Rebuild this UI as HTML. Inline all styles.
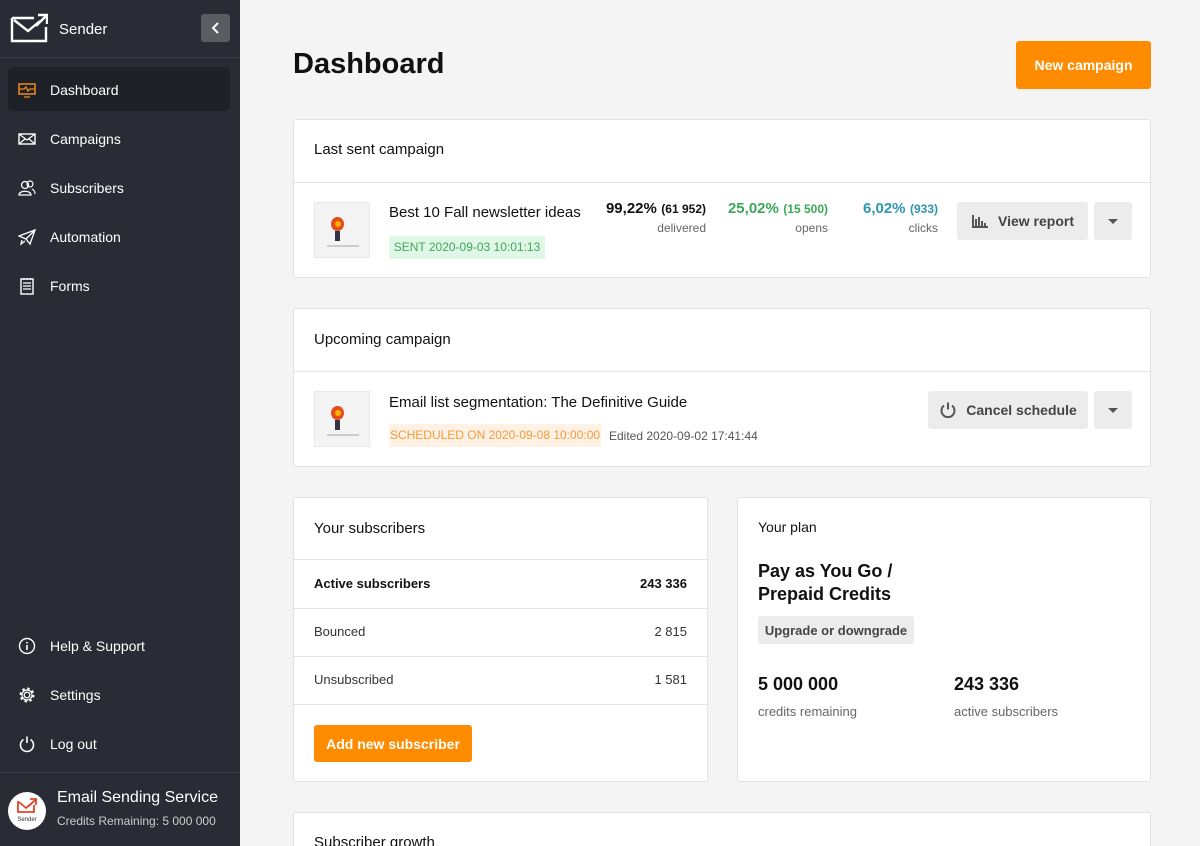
<!DOCTYPE html>
<html><head><meta charset="utf-8"><style>
*{box-sizing:border-box;margin:0;padding:0}
html,body{width:1200px;height:846px;overflow:hidden}
body{background:#f4f4f4;font-family:"Liberation Sans",Arial,sans-serif;position:relative;color:#111}
.a{position:absolute}
#sb{left:0;top:0;width:240px;height:846px;background:#292c34}
.mi{position:absolute;left:50px;color:#fff;font-size:14px;transform:translateY(-50%)}
.ic{position:absolute;left:18px;width:18px;height:18px;transform:translateY(-50%)}
.card{position:absolute;background:#fff;border:1px solid #e2e2e2;border-radius:3px}
.hd{font-size:15px;color:#111}
.thumb{position:absolute;width:56px;height:56px;background:#f4f4f4;border:1px solid #e8e8e8}
.btn{position:absolute;background:#ececec;border-radius:3px;font-weight:bold;font-size:14px;color:#444;display:flex;align-items:center;justify-content:center}
.dd{position:absolute;width:38px;height:38px;background:#ececec;border-radius:3px}
.dd:after{content:"";position:absolute;left:14px;top:17px;border-left:5px solid transparent;border-right:5px solid transparent;border-top:5px solid #555}
.line{position:absolute;left:0;right:0;height:1px;background:#e2e2e2}
.or{position:absolute;background:#ff8c00;color:#fff;font-weight:bold;font-size:14px;border-radius:3px;display:flex;align-items:center;justify-content:center}
</style></head><body>
<div id="sb" class="a">
 <svg class="a" style="left:10px;top:13px" width="38" height="30" viewBox="0 0 38 30"><path d="M2 5H24M2 5V28H36V14M4 7L18 18L30 8" fill="none" stroke="#fff" stroke-width="2.4"/><path d="M28 2H37V11M37 2L26 13" fill="none" stroke="#fff" stroke-width="2.4"/></svg>
 <div class="a" style="left:59px;top:21px;color:#fff;font-size:15px">Sender</div>
 <div class="a" style="left:201px;top:14px;width:29px;height:28px;background:#5a5c62;border-radius:3px"><svg width="29" height="28"><path d="M17 9L12 14L17 19" fill="none" stroke="#fff" stroke-width="2"/></svg></div>
 <div class="a" style="left:0;top:57px;width:240px;height:1px;background:#3c3f47"></div>
 <div class="a" style="left:8px;top:67px;width:222px;height:44px;background:#1f2128;border-radius:5px"></div>
 <svg class="ic" style="top:90px" viewBox="0 0 18 18"><rect x="1" y="3" width="16" height="10" fill="none" stroke="#f08a1c" stroke-width="1.5"/><path d="M1 8H6L8 6L10 10L12 8H17M6 16H12" fill="none" stroke="#f08a1c" stroke-width="1.3"/></svg>
 <div class="mi" style="top:90px">Dashboard</div>
 <svg class="ic" style="top:139px" viewBox="0 0 18 18"><rect x="1" y="4" width="16" height="10" fill="none" stroke="#fff" stroke-width="1.4"/><path d="M1 4L9 10L17 4M1 14L7 9M17 14L11 9" fill="none" stroke="#fff" stroke-width="1.2"/></svg>
 <div class="mi" style="top:139px">Campaigns</div>
 <svg class="ic" style="top:188px" viewBox="0 0 18 18"><circle cx="7" cy="6" r="3.5" fill="none" stroke="#fff" stroke-width="1.3"/><path d="M1 16C1 11 13 11 13 16Z" fill="none" stroke="#fff" stroke-width="1.3"/><circle cx="12" cy="5" r="3" fill="none" stroke="#fff" stroke-width="1.2"/><path d="M14 10C16 11 17 13 17 15" fill="none" stroke="#fff" stroke-width="1.2"/></svg>
 <div class="mi" style="top:188px">Subscribers</div>
 <svg class="ic" style="top:237px" viewBox="0 0 18 18"><path d="M1 8L17 2L12 16L8 11Z M8 11L17 2M4 12L3 16L7 13" fill="none" stroke="#fff" stroke-width="1.3"/></svg>
 <div class="mi" style="top:237px">Automation</div>
 <svg class="ic" style="top:286px" viewBox="0 0 18 18"><rect x="3" y="2" width="12" height="15" fill="none" stroke="#fff" stroke-width="1.4"/><path d="M5 6H13M5 9H13M5 12H13M6 1V3M9 1V3M12 1V3" stroke="#fff" stroke-width="1.2"/></svg>
 <div class="mi" style="top:286px">Forms</div>
 <svg class="ic" style="top:646px" viewBox="0 0 18 18"><circle cx="9" cy="9" r="7.5" fill="none" stroke="#fff" stroke-width="1.4"/><path d="M9 8V13M9 5V6.5" stroke="#fff" stroke-width="1.6"/></svg>
 <div class="mi" style="top:646px">Help &amp; Support</div>
 <svg class="ic" style="top:695px" viewBox="0 0 18 18"><circle cx="9" cy="9" r="2.8" fill="none" stroke="#fff" stroke-width="1.3"/><circle cx="9" cy="9" r="6.3" fill="none" stroke="#fff" stroke-width="2.4" stroke-dasharray="2.4 2.55"/><circle cx="9" cy="9" r="5" fill="none" stroke="#fff" stroke-width="1.2"/></svg>
 <div class="mi" style="top:695px">Settings</div>
 <svg class="ic" style="top:744px" viewBox="0 0 18 18"><path d="M5.5 4.5A6.5 6.5 0 1 0 12.5 4.5M9 1.5V8" fill="none" stroke="#fff" stroke-width="1.6"/></svg>
 <div class="mi" style="top:744px">Log out</div>
 <div class="a" style="left:0;top:772px;width:240px;height:1px;background:#3c3f47"></div>
 <div class="a" style="left:8px;top:792px;width:38px;height:38px;border-radius:50%;background:#fff">
  <svg class="a" style="left:9px;top:6px" width="20" height="16" viewBox="0 0 20 16"><path d="M1 3V14H17V7M2 4L9 10L15 5M13 1H19V7M19 1L12 8" fill="none" stroke="#e2452b" stroke-width="1.8"/></svg>
  <div class="a" style="left:0;width:38px;top:25px;font-size:6px;text-align:center;color:#333">Sender</div>
 </div>
 <div class="a" style="left:57px;top:789px;color:#fff;font-size:16px">Email Sending Service</div>
 <div class="a" style="left:57px;top:814px;color:#ccc;font-size:12px">Credits Remaining: 5 000 000</div>
</div>

<div class="a" style="left:293px;top:48px;font-size:29px;font-weight:bold">Dashboard</div>
<div class="or" style="left:1016px;top:41px;width:135px;height:48px">New campaign</div>

<div class="card" style="left:293px;top:119px;width:858px;height:159px">
 <div class="a hd" style="left:20px;top:21px">Last sent campaign</div>
 <div class="line" style="top:62px"></div>
 <div class="thumb" style="left:20px;top:82px"><div class="a" style="left:16px;top:14px;width:13px;height:14px;border-radius:50%;background:#e64b1e"></div><div class="a" style="left:20px;top:18px;width:6px;height:6px;border-radius:50%;background:#f6b500"></div><div class="a" style="left:20px;top:28px;width:5px;height:10px;background:#334"></div><div class="a" style="left:12px;top:42px;width:32px;height:2px;background:#ccc"></div></div>
 <div class="a" style="left:95px;top:84px;font-size:15px">Best 10 Fall newsletter ideas</div>
 <div class="a" style="left:95px;top:116px;height:23px;width:156px;background:#e0f7e7;color:#3fa85c;font-size:12px;line-height:23px;text-align:center">SENT 2020-09-03 10:01:13</div>
 <div class="a" style="right:444px;top:80px;text-align:right"><span style="font-size:15px;font-weight:bold">99,22%</span> <span style="font-size:12px;font-weight:bold">(61 952)</span><div style="font-size:12px;color:#666;margin-top:3px">delivered</div></div>
 <div class="a" style="right:322px;top:80px;text-align:right;color:#3aa856"><span style="font-size:15px;font-weight:bold">25,02%</span> <span style="font-size:12px;font-weight:bold">(15 500)</span><div style="font-size:12px;color:#666;margin-top:3px">opens</div></div>
 <div class="a" style="right:212px;top:80px;text-align:right;color:#2e96b0"><span style="font-size:15px;font-weight:bold">6,02%</span> <span style="font-size:12px;font-weight:bold">(933)</span><div style="font-size:12px;color:#666;margin-top:3px">clicks</div></div>
 <div class="btn" style="left:663px;top:82px;width:131px;height:38px"><svg width="18" height="14" style="margin-right:9px"><path d="M2 1V13H17M5 5V12M8 3V12M11 7V12M14 9V12" stroke="#555" stroke-width="2" fill="none"/></svg>View report</div>
 <div class="dd" style="left:800px;top:82px"></div>
</div>

<div class="card" style="left:293px;top:308px;width:858px;height:159px">
 <div class="a hd" style="left:20px;top:22px">Upcoming campaign</div>
 <div class="line" style="top:62px"></div>
 <div class="thumb" style="left:20px;top:82px"><div class="a" style="left:16px;top:14px;width:13px;height:14px;border-radius:50%;background:#e64b1e"></div><div class="a" style="left:20px;top:18px;width:6px;height:6px;border-radius:50%;background:#f6b500"></div><div class="a" style="left:20px;top:28px;width:5px;height:10px;background:#334"></div><div class="a" style="left:12px;top:42px;width:32px;height:2px;background:#ccc"></div></div>
 <div class="a" style="left:95px;top:85px;font-size:15px">Email list segmentation: The Definitive Guide</div>
 <div class="a" style="left:95px;top:115px;height:23px;width:212px;background:#fff1e3;color:#f59a3a;font-size:12px;line-height:23px;text-align:center">SCHEDULED ON 2020-09-08 10:00:00</div>
 <div class="a" style="left:315px;top:120px;font-size:12px;color:#555">Edited 2020-09-02 17:41:44</div>
 <div class="btn" style="left:634px;top:82px;width:160px;height:38px"><svg width="18" height="18" style="margin-right:9px"><path d="M5 4.5A6.5 6.5 0 1 0 13 4.5M9 1.5V8.5" fill="none" stroke="#555" stroke-width="2"/></svg>Cancel schedule</div>
 <div class="dd" style="left:800px;top:82px"></div>
</div>

<div class="card" style="left:293px;top:497px;width:415px;height:285px">
 <div class="a hd" style="left:20px;top:22px">Your subscribers</div>
 <div class="line" style="top:61px"></div>
 <div class="a" style="left:20px;top:78px;font-size:13px;font-weight:bold">Active subscribers</div>
 <div class="a" style="right:20px;top:78px;font-size:13px;font-weight:bold">243 336</div>
 <div class="line" style="top:110px"></div>
 <div class="a" style="left:20px;top:126px;font-size:13px;color:#333">Bounced</div>
 <div class="a" style="right:20px;top:126px;font-size:13px;color:#333">2 815</div>
 <div class="line" style="top:158px"></div>
 <div class="a" style="left:20px;top:174px;font-size:13px;color:#333">Unsubscribed</div>
 <div class="a" style="right:20px;top:174px;font-size:13px;color:#333">1 581</div>
 <div class="line" style="top:206px"></div>
 <div class="or" style="left:20px;top:227px;width:158px;height:37px">Add new subscriber</div>
</div>

<div class="card" style="left:737px;top:497px;width:414px;height:285px">
 <div class="a hd" style="left:20px;top:21px;font-size:14px">Your plan</div>
 <div class="a" style="left:20px;top:62px;font-size:18px;font-weight:bold;line-height:23px">Pay as You Go /<br>Prepaid Credits</div>
 <div class="btn" style="left:20px;top:118px;width:156px;height:28px;font-size:13px">Upgrade or downgrade</div>
 <div class="a" style="left:20px;top:176px;font-size:18px;font-weight:bold">5 000 000</div>
 <div class="a" style="left:20px;top:206px;font-size:13px;color:#666">credits remaining</div>
 <div class="a" style="left:216px;top:176px;font-size:18px;font-weight:bold">243 336</div>
 <div class="a" style="left:216px;top:206px;font-size:13px;color:#666">active subscribers</div>
</div>

<div class="card" style="left:293px;top:812px;width:858px;height:34px;border-bottom:none;border-radius:3px 3px 0 0">
 <div class="a hd" style="left:20px;top:21px">Subscriber growth</div>
</div>
</body></html>
